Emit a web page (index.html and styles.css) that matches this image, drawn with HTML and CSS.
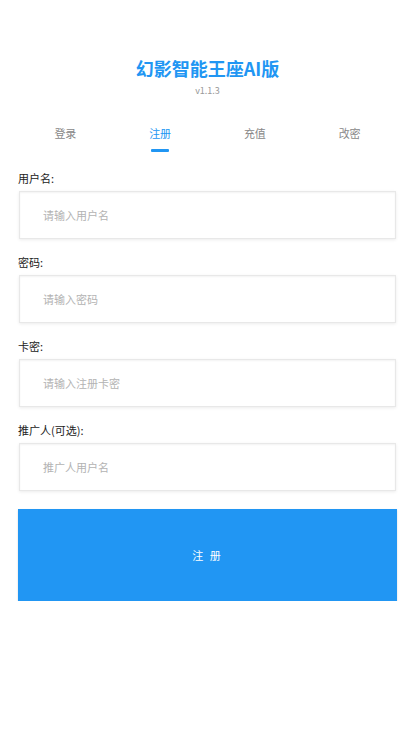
FILE: index.html
```
<!DOCTYPE html>
<html lang="zh-CN">
<head>
<meta charset="utf-8">
<title>幻影智能王座AI版</title>
<link rel="stylesheet" href="styles.css">
</head>
<body>
<div class="page">
  <header class="header">
    <h1 class="title">幻影智能王座AI版</h1>
    <div class="version">v1.1.3</div>
  </header>
  <nav class="tabs">
    <div class="tab">登录</div>
    <div class="tab active">注册<span class="bar"></span></div>
    <div class="tab">充值</div>
    <div class="tab">改密</div>
  </nav>
  <form class="form">
    <div class="field">
      <label class="label">用户名:</label>
      <div class="input"><span class="ph">请输入用户名</span></div>
    </div>
    <div class="field">
      <label class="label">密码:</label>
      <div class="input"><span class="ph">请输入密码</span></div>
    </div>
    <div class="field">
      <label class="label">卡密:</label>
      <div class="input"><span class="ph">请输入注册卡密</span></div>
    </div>
    <div class="field">
      <label class="label">推广人(可选):</label>
      <div class="input"><span class="ph">推广人用户名</span></div>
    </div>
    <div class="submit">注 册</div>
  </form>
</div>
</body>
</html>
```
FILE: styles.css
```
* { box-sizing: border-box; }
html, body { margin: 0; padding: 0; background: #fff; }
body {
  font-family: "Noto Sans CJK SC", "Noto Sans", Roboto, sans-serif;
  color: #333;
}
.page { padding: 0 18px; }
.header { padding-top: 56px; text-align: center; }
.title {
  margin: 0;
  font-size: 18px;
  line-height: 24px;
  font-weight: 700;
  color: #2196f3;
}
.version {
  margin-top: 5px;
  font-size: 9px;
  line-height: 12px;
  color: #999;
}
.tabs {
  display: grid;
  grid-template-columns: repeat(4, 1fr);
  margin-top: 26px;
}
.tab {
  position: relative;
  display: flex;
  flex-direction: column;
  align-items: center;
  font-size: 11px;
  line-height: 20px;
  color: #888;
  height: 29px;
}
.tab.active { color: #2196f3; }
.tab .bar {
  display: block;
  width: 18px;
  height: 3px;
  margin-top: 6px;
  background: #2196f3;
  border-radius: 1px;
}
.form { margin-top: 19px; }
.field { margin-bottom: 16px; }
.label {
  display: block;
  font-size: 11px;
  line-height: 14px;
  color: #222;
  margin-bottom: 6px;
}
.input {
  height: 48px;
  margin: 0 1px;
  border: 1px solid #e8e8e8;
  box-shadow: 0 1px 3px rgba(0,0,0,0.08), inset 0 1px 2px rgba(0,0,0,0.05);
  display: flex;
  align-items: center;
  padding-left: 23px;
}
.ph { font-size: 11px; color: #b3b3b3; }
.submit {
  margin-top: 18px;
  height: 92px;
  background: #2196f3;
  color: #fff;
  font-size: 11px;
  letter-spacing: 2px;
  display: flex;
  align-items: center;
  justify-content: center;
  box-shadow: 0 1px 2px rgba(0,0,0,0.15);
}
```
